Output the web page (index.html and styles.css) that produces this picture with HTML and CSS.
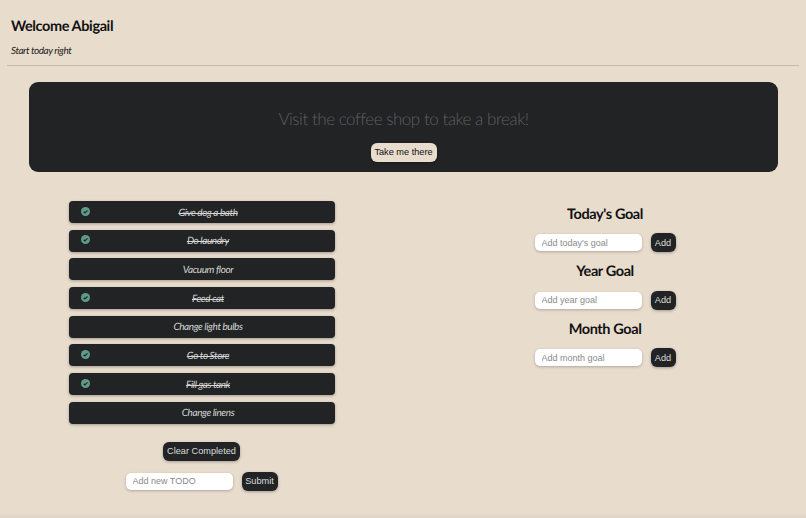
FILE: index.html
```html
<!DOCTYPE html>
<html lang="en">
<head>
<meta charset="utf-8">
<title>Welcome Abigail</title>
<link rel="stylesheet" href="styles.css">
</head>
<body>
<header class="header">
  <h1 class="welcome">Welcome Abigail</h1>
  <p class="tagline">Start today right</p>
</header>
<hr class="rule">
<section class="banner">
  <p class="banner-text">Visit the coffee shop to take a break!</p>
  <button class="btn-light">Take me there</button>
</section>
<main class="columns">
  <section class="todo-col">
    <ul class="todo-list">
      <li class="todo done"><svg class="check" viewBox="0 0 10 10"><circle cx="5" cy="5" r="5" fill="#5f9c88"/><path d="M2.9 5.2 4.4 6.6 7.2 3.7" fill="none" stroke="#1f2a28" stroke-width="1.4"/></svg><span class="todo-text">Give dog a bath</span></li>
      <li class="todo done"><svg class="check" viewBox="0 0 10 10"><circle cx="5" cy="5" r="5" fill="#5f9c88"/><path d="M2.9 5.2 4.4 6.6 7.2 3.7" fill="none" stroke="#1f2a28" stroke-width="1.4"/></svg><span class="todo-text">Do laundry</span></li>
      <li class="todo"><span class="todo-text">Vacuum floor</span></li>
      <li class="todo done"><svg class="check" viewBox="0 0 10 10"><circle cx="5" cy="5" r="5" fill="#5f9c88"/><path d="M2.9 5.2 4.4 6.6 7.2 3.7" fill="none" stroke="#1f2a28" stroke-width="1.4"/></svg><span class="todo-text">Feed cat</span></li>
      <li class="todo"><span class="todo-text">Change light bulbs</span></li>
      <li class="todo done"><svg class="check" viewBox="0 0 10 10"><circle cx="5" cy="5" r="5" fill="#5f9c88"/><path d="M2.9 5.2 4.4 6.6 7.2 3.7" fill="none" stroke="#1f2a28" stroke-width="1.4"/></svg><span class="todo-text">Go to Store</span></li>
      <li class="todo done"><svg class="check" viewBox="0 0 10 10"><circle cx="5" cy="5" r="5" fill="#5f9c88"/><path d="M2.9 5.2 4.4 6.6 7.2 3.7" fill="none" stroke="#1f2a28" stroke-width="1.4"/></svg><span class="todo-text">Fill gas tank</span></li>
      <li class="todo"><span class="todo-text">Change linens</span></li>
    </ul>
    <button class="btn-dark clear">Clear Completed</button>
    <form class="add-row add-todo">
      <input class="field" placeholder="Add new TODO">
      <button class="btn-dark" type="button">Submit</button>
    </form>
  </section>
  <section class="goal-col">
    <h2 class="goal-title">Today's Goal</h2>
    <form class="add-row"><input class="field" placeholder="Add today's goal"><button class="btn-dark" type="button">Add</button></form>
    <h2 class="goal-title">Year Goal</h2>
    <form class="add-row"><input class="field" placeholder="Add year goal"><button class="btn-dark" type="button">Add</button></form>
    <h2 class="goal-title">Month Goal</h2>
    <form class="add-row"><input class="field" placeholder="Add month goal"><button class="btn-dark" type="button">Add</button></form>
  </section>
</main>
</body>
</html>
```
FILE: styles.css
```css
* { box-sizing: border-box; }
html, body { height: 100%; }
body {
  margin: 0;
  overflow: hidden;
  background: linear-gradient(to top, #ded2c5 0, #e8dccd 5px);
  color: #111;
  font-family: Lato, "Liberation Sans", sans-serif;
  text-rendering: geometricPrecision;
}
.header { padding: 18px 11px 0; }
.welcome { margin: 0; font-size: 14.5px; line-height: 17px; font-weight: 700; letter-spacing: -.4px; }
.tagline { margin: 9.5px 0 0; font-size: 10px; line-height: 12px; font-style: italic; color: #222; letter-spacing: -.45px; }
.rule { margin: 8.5px 7px 0; border: 0; border-top: 1px solid #c4bcb3; }
.banner {
  margin: 16px 28px 0 29px;
  height: 90px;
  padding-top: 27px;
  background: #212324;
  border-radius: 9px;
  text-align: center;
}
.banner-text {
  margin: 0 0 12px;
  font-size: 17px;
  line-height: 19px;
  font-weight: 300;
  letter-spacing: -.47px;
  color: #5d6062;
}
.btn-light, .btn-dark {
  font-family: "Liberation Sans", Arial, sans-serif;
  font-size: 9.2px;
  white-space: nowrap;
  border: 0;
  border-radius: 6px;
  padding: 0;
  box-shadow: 0 1px 3px rgba(0,0,0,.3);
}
.btn-light { width: 66px; height: 19px; background: #e8dccd; color: #111; }
.btn-dark { height: 19px; background: #212324; color: #ddd; }
.columns { display: grid; grid-template-columns: 403px 403px; margin-top: 29px; }
.todo-col { display: flex; flex-direction: column; align-items: center; }
.todo-list { list-style: none; margin: 0; padding: 0; width: 266px; display: flex; flex-direction: column; gap: 6.7px; }
.todo {
  position: relative;
  height: 22px;
  padding: 1px 0 0 13px;
  background: #212324;
  border-radius: 4px;
  box-shadow: 0 1px 3px rgba(0,0,0,.3);
  display: flex;
  align-items: center;
  justify-content: center;
  font-size: 10px;
  letter-spacing: -.4px;
  font-style: italic;
  color: #d6d6d6;
}
.check { position: absolute; left: 12px; top: 5.5px; width: 9px; height: 9px; }
.done .todo-text { text-decoration: line-through; }
.clear { width: 77px; margin-top: 18px; }
.add-row { display: flex; align-items: center; gap: 9px; }
.add-todo { margin-top: 11px; }
.add-todo .btn-dark { width: 36px; }
.field {
  width: 107px;
  height: 17px;
  padding: 0 7px;
  border: 0;
  border-radius: 5px;
  background: #fff;
  font-family: "Liberation Sans", Arial, sans-serif;
  font-size: 9px;
  box-shadow: 0 1px 3px rgba(0,0,0,.25);
}
.field::placeholder { color: #8a8a8a; }
.goal-col { display: flex; flex-direction: column; align-items: center; padding: 4.5px 0 0 1px; }
.goal-title { margin: 0; font-size: 14.5px; line-height: 18px; font-weight: 700; letter-spacing: -.4px; color: #111; }
.goal-col .add-row { margin: 9.5px 0 11px; }
.goal-col .btn-dark { width: 25px; }
```
